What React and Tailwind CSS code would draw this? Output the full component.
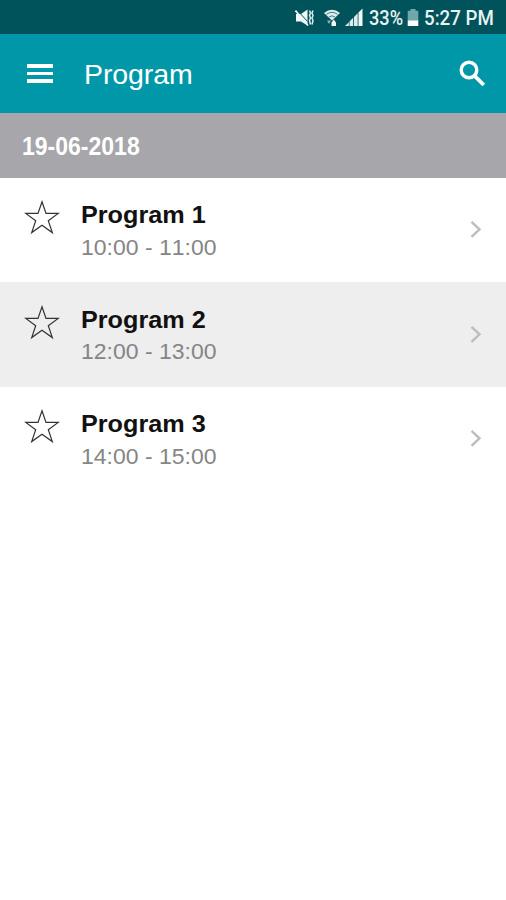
import React from "react";

const programs = [
  { title: "Program 1", time: "10:00 - 11:00" },
  { title: "Program 2", time: "12:00 - 13:00" },
  { title: "Program 3", time: "14:00 - 15:00" },
];

const MuteIcon = () => (
  <svg className="ml-[295px] h-[20px] w-[20px] shrink-0" viewBox="0 0 20 20" fill="none">
    <path d="M1 6h5l6.5-4.5v16L6 13.5H1z" fill="#f1f8f8" />
    <path d="M14.5 2.5l1 2.5-1 2.5 1 2.5-1 2.5 1 4M18 2.5l-1 2.5 1 2.5-1 2.5 1 2.5-1 4" stroke="#dcebec" strokeWidth="1.5" />
    <path d="M2.5 2.5l10 11" stroke="#00525b" strokeWidth="1" />
    <path d="M0.5 2.5l12.5 15" stroke="#f1f8f8" strokeWidth="1.6" />
  </svg>
);

const WifiIcon = () => (
  <svg className="ml-[8px] h-[20px] w-[18px] shrink-0" viewBox="0 0 18 20" fill="none">
    <path d="M1 5Q9-1.5 17 5L9 12.5z" fill="#dcebec" />
    <path d="M3.5 6.3Q9 2.3 14.5 6.3M6 9Q9 6.6 12 9" stroke="#3f7c83" strokeWidth="1" />
    <path d="M4 12.5h4l-2 3.5z" fill="#8db5b9" />
    <path d="M8.5 14.5l2.3-3 2.2 3V18H8.5z" fill="#f1f8f8" />
  </svg>
);

const SignalIcon = () => (
  <svg className="ml-[4px] h-[20px] w-[18px] shrink-0" viewBox="0 0 18 20">
    <path d="M0 18l3.8-3.8V18zM4.5 13.5L8.2 9.8V18H4.5zM9 9l3.7-3.7V18H9z" fill="#dcebec" />
    <path d="M13.5 4.5l4-4V18h-4z" fill="#f1f8f8" />
  </svg>
);

const BatteryIcon = () => (
  <svg className="ml-[3px] h-[20px] w-[12px] shrink-0" viewBox="0 0 12 20">
    <path d="M3.5 1h5v1.7h2.8V13H.7V2.7h2.8z" fill="#6fa8ab" />
    <path d="M.7 12.5h10.6V18H.7z" fill="#fff" />
  </svg>
);

const StatusBar = () => (
  <div className="flex h-[34px] items-center bg-[#00525b] pt-[1px] font-['Roboto',sans-serif] text-[20px] font-medium text-[#e8f3f3]">
    <MuteIcon />
    <WifiIcon />
    <SignalIcon />
    <span className="ml-[6px] w-[35px] origin-left scale-x-[0.91] whitespace-nowrap pt-px">33%</span>
    <BatteryIcon />
    <span className="ml-[5px] origin-left scale-x-[0.935] whitespace-nowrap pt-px">5:27 PM</span>
  </div>
);

const Header = () => (
  <header className="flex h-[79px] items-center bg-[#0098a8] pl-[27px] pr-[20px] text-white">
    <button aria-label="Menu" className="flex w-[26px] flex-col gap-[4px]">
      <span className="h-[3.5px] bg-white" />
      <span className="h-[3.5px] bg-white" />
      <span className="h-[3.5px] bg-white" />
    </button>
    <h1 className="ml-[31px] pt-px text-[28.5px] leading-8 tracking-[-0.1px]">Program</h1>
    <button aria-label="Search" className="ml-auto">
      <svg className="h-[27px] w-[27px]" viewBox="0 0 27 27" fill="none" stroke="white" strokeWidth="3.4">
        <circle cx="10" cy="10" r="7.8" />
        <path d="M15.6 15.8l9.2 9.2" strokeWidth="3.8" />
      </svg>
    </button>
  </header>
);

const ProgramRow = ({ title, time }) => (
  <li className="flex h-[104.5px] pl-[24px] pr-[24px] even:bg-[#eeeeee]">
    <svg className="mt-[22.5px] h-[36px] w-[36px] shrink-0" viewBox="0 0 36 36" fill="none" stroke="#333" strokeWidth="1.2">
      <path d="M18 1.8l4 11.6h12.2L24.3 20.8l4 11.8L18 25.3 7.7 32.6l4-11.8L1.8 13.4H14z" />
    </svg>
    <div className="ml-[20.5px] pt-[22.9px]">
      <h2 className="origin-left scale-x-[1.05] text-[24px] font-bold leading-[30px] text-[#111]">{title}</h2>
      <p className="mt-[2.4px] origin-left scale-x-[1.045] text-[22px] leading-[30px] text-[#858585] [font-kerning:none]">{time}</p>
    </div>
    <svg className="ml-auto mt-[42.5px] h-[20px] w-[12px]" viewBox="0 0 12 20" fill="none" stroke="#bdbdbd" strokeWidth="2.4">
      <path d="M1.5 1.8L9.5 9.3 1.5 16.8" />
    </svg>
  </li>
);

const App = () => {
  return (
    <div className="min-h-screen bg-white font-['Liberation_Sans',Arial,sans-serif]">
      <StatusBar />
      <Header />
      <div className="flex h-[64.5px] items-center bg-[#a7a6ab] pl-[21.5px] pt-[2px] text-[26px] font-bold text-white">
        <span className="origin-left scale-x-[0.885]">19-06-2018</span>
      </div>
      <ul>
        {programs.map((program) => (
          <ProgramRow key={program.title} {...program} />
        ))}
      </ul>
    </div>
  );
};

export default App;
